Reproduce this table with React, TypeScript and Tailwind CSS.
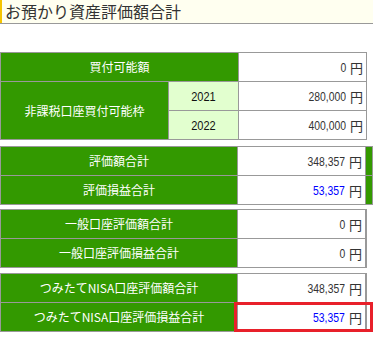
import React from "react";

const G = "bg-[#339900] text-white flex items-center justify-center";
const W = "bg-white flex items-center justify-end pr-[3px] text-[#333]";

function Val({ v, blue }: { v: string; blue?: boolean }) {
  return (
    <span className="flex items-center">
      <span
        className={`inline-block origin-right scale-x-[0.8] text-[13px] ${blue ? "text-[#0000ff]" : "text-[#333]"}`}
        style={{ fontFamily: '"Liberation Sans", sans-serif' }}
      >
        {v}
      </span>
      <span className="ml-[4px] text-[13px] text-[#333]">円</span>
    </span>
  );
}

export default function App() {
  return (
    <div
      className="relative w-[373px] h-[341px] overflow-hidden bg-white text-[12px] leading-none"
      style={{ fontFamily: '"Noto Sans CJK JP", sans-serif' }}
    >
      <div className="h-[24px] border-b border-[#999] bg-[#fffff0] flex">
        <div className="w-[2px] h-[23px] bg-[#f5c400]" />
        <div className="pl-[3px] pt-[1px] text-[16px] text-[#333] leading-[20px]">お預かり資産評価額合計</div>
      </div>

      {/* table 1 */}
      <div className="mt-[28px] w-[367px] bg-[#999] p-px grid grid-cols-[167px_69px_127px] grid-rows-[28px_28px_28px] gap-px">
        <div className={`${G} col-span-2`}>買付可能額</div>
        <div className={W}><Val v="0" /></div>
        <div className={`${G} row-span-2`}>非課税口座買付可能枠</div>
        <div className="bg-[#e2ffcf] flex items-center justify-center text-[#111]">
          <span className="inline-block scale-x-[0.85] text-[13px]" style={{ fontFamily: '"Liberation Sans", sans-serif' }}>2021</span>
        </div>
        <div className={W}><Val v="280,000" /></div>
        <div className="bg-[#e2ffcf] flex items-center justify-center text-[#111]">
          <span className="inline-block scale-x-[0.85] text-[13px]" style={{ fontFamily: '"Liberation Sans", sans-serif' }}>2022</span>
        </div>
        <div className={W}><Val v="400,000" /></div>
      </div>

      {/* table 2 */}
      <div className="mt-[6px] w-[373px] bg-[#999] pt-px pl-px grid grid-cols-[236px_127px_6px] grid-rows-[28px_28px] gap-px pb-px">
        <div className={G}>評価額合計</div>
        <div className={W}><Val v="348,357" /></div>
        <div className="bg-[#339900]" />
        <div className={G}>評価損益合計</div>
        <div className={W}><Val v="53,357" blue /></div>
        <div className="bg-[#339900]" />
      </div>

      {/* table 3 */}
      <div className="mt-[4px] w-[367px] bg-[#999] p-px grid grid-cols-[236px_127px] grid-rows-[28px_28px] gap-px">
        <div className={G}>一般口座評価額合計</div>
        <div className={W}><Val v="0" /></div>
        <div className={G}>一般口座評価損益合計</div>
        <div className={W}><Val v="0" /></div>
      </div>

      {/* table 4 */}
      <div className="relative mt-[5px] w-[367px] bg-[#999] p-px grid grid-cols-[236px_127px] grid-rows-[28px_28px] gap-px">
        <div className={G}>つみたてNISA口座評価額合計</div>
        <div className={W}><Val v="348,357" /></div>
        <div className={G}>つみたてNISA口座評価損益合計</div>
        <div className={W}><Val v="53,357" blue /></div>
        <div className="absolute left-[234px] top-[29px] w-[139px] h-[30px] border-[3px] border-[#e8202a]" />
      </div>
    </div>
  );
}
